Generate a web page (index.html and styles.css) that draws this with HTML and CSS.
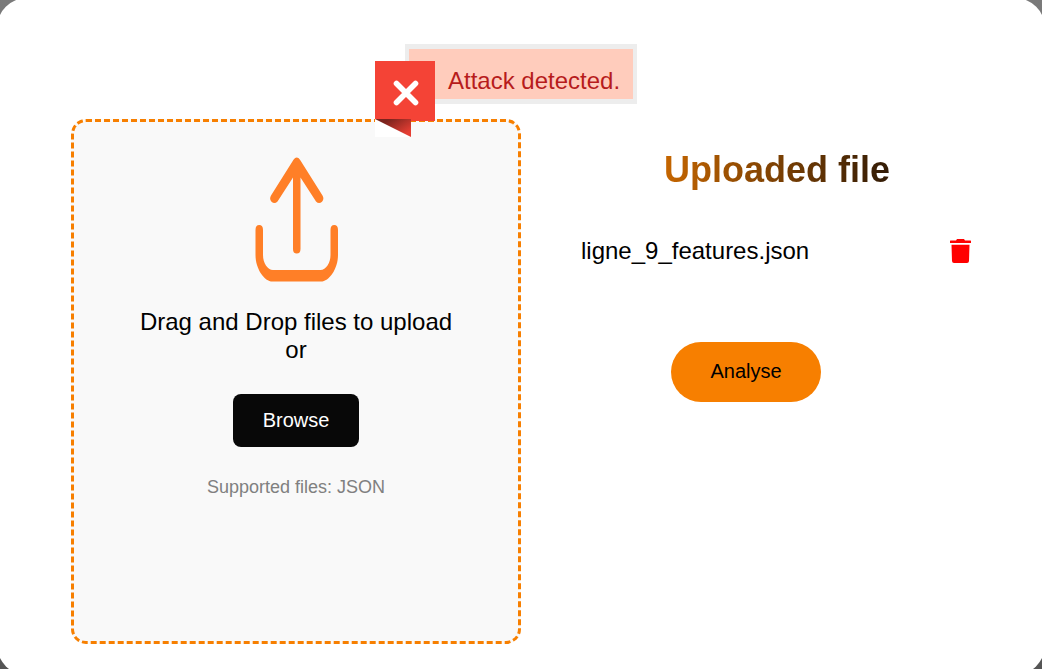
FILE: index.html
```html
<!DOCTYPE html>
<html lang="en">
<head>
<meta charset="utf-8">
<title>Upload</title>
<link rel="stylesheet" href="styles.css">
</head>
<body>
<main class="card">
  <div class="alert" role="alert">
    <span class="alert-text">Attack detected.</span>
    <span class="alert-badge">
      <svg class="cross" viewBox="0 0 26 26"><path d="M3.500 3.500 22.500 22.500M22.500 3.500 3.500 22.500"/></svg>
    </span>
    <svg class="fold" viewBox="0 0 36 18">
      <defs><linearGradient id="shade" gradientUnits="userSpaceOnUse" x1="14" y1="0" x2="26" y2="18"><stop offset="0" stop-color="#7a231d"/><stop offset="1" stop-color="#e53e33"/></linearGradient></defs>
      <rect width="36" height="18" fill="#fff"/>
      <path d="M0 0H36V18Z" fill="url(#shade)"/>
    </svg>
  </div>
  <div class="columns">
    <section class="dropzone">
      <svg class="upload-icon" viewBox="0 0 84 126">
        <path d="M41.700 .5Q43.500 .5 45 2.700L67.500 38.500Q69.500 42 67 44.700Q64 47.500 61 44.500L45.500 20.500V92Q45.500 96.500 41.700 96.500Q38 96.500 38 92V20.500L22.500 44.500Q19.500 47.500 16.500 44.700Q14 42 16 38.500L38.500 2.700Q40 .5 41.700 .5Z"/>
        <path d="M.5 73Q.5 68 4.200 68Q8 68 8 73V98C8 106 12.500 113 18 113H65.500C71 113 75.500 106 75.500 98V73Q75.500 68 79.200 68Q83 68 83 73V98C83 112 74 124.600 66 124.600H17.500C9.500 124.600.5 112 .5 98Z"/>
      </svg>
      <p class="lead">Drag and Drop files to upload<br>or</p>
      <button class="browse">Browse</button>
      <p class="hint">Supported files: JSON</p>
    </section>
    <section class="files">
      <h1 class="title">Uploaded file</h1>
      <div class="file-row">
        <span>ligne_9_features.json</span>
        <svg class="trash" viewBox="0 0 21 24"><path d="M.5 1.500H6L7 0h7l1 1.500h5.500q.5 0 .5.5V4H0V2q0-.5.5-.5ZM1.500 5.800h18L19 22q-.1 2-2 2h-13q-1.900 0-2-2Z"/></svg>
      </div>
      <button class="analyse">Analyse</button>
    </section>
  </div>
</main>
</body>
</html>
```
FILE: styles.css
```css
* { box-sizing: border-box; }
body {
  margin: 0;
  height: 669px;
  overflow: hidden;
  display: flex;
  justify-content: center;
  background: linear-gradient(#7a7a7a, #555);
  font-family: "Liberation Sans", Arial, sans-serif;
  font-size: 24px;
  color: #000;
}
p, h1 { margin: 0; }
button { border: 0; padding: 0; font-family: inherit; }
.card {
  flex: none;
  width: 1048px;
  height: 677px;
  margin-top: -2px;
  padding-top: 46px;
  border-radius: 30px;
  background: #fff;
}
.alert {
  position: relative;
  width: 232px;
  height: 60px;
  margin-left: 408px;
  padding: 17px 0 0 39px;
  border: solid #ededed;
  border-width: 5px 4px;
  background: #ffccbc;
  color: #b71c1c;
  line-height: 30px;
  white-space: nowrap;
}
.alert-badge {
  position: absolute;
  left: -34px;
  top: 12px;
  width: 60px;
  height: 60px;
  display: grid;
  place-items: center;
  padding: 3px 0 0 1px;
  background: #f44336;
}
.cross {
  width: 26px;
  height: 26px;
  fill: none;
  stroke: #fff;
  stroke-width: 5.6;
  stroke-linecap: round;
}
.fold {
  position: absolute;
  left: -34px;
  top: 70px;
  width: 36px;
  height: 18px;
}
.columns {
  display: flex;
  gap: 60px;
  margin-top: 15px;
  padding-left: 74px;
}
.dropzone {
  width: 450px;
  height: 525px;
  display: flex;
  flex-direction: column;
  align-items: center;
  padding-top: 35px;
  border: 3px dashed #f77f00;
  border-radius: 15px;
  background: #f9f9f9;
}
.upload-icon {
  width: 84px;
  height: 126px;
  margin-left: 2px;
  fill: #ff7f27;
}
.lead {
  margin-top: 25px;
  line-height: 28px;
  text-align: center;
}
.browse {
  width: 126px;
  height: 53px;
  margin-top: 30px;
  border-radius: 8px;
  background: #080808;
  color: #fff;
  font-size: 20px;
}
.hint {
  margin-top: 30px;
  color: #808080;
  font-size: 18px;
  line-height: 20px;
}
.files { width: 390px; }
.title {
  width: max-content;
  margin: 30px 0 0 83px;
  font-size: 36px;
  line-height: 42px;
  color: transparent;
  background: linear-gradient(to right, #c66600, #321b06);
  background-clip: text;
  -webkit-background-clip: text;
}
.file-row {
  display: flex;
  justify-content: space-between;
  align-items: center;
  height: 30px;
  margin-top: 45px;
}
.trash {
  width: 21px;
  height: 24px;
  fill: #f00;
}
.analyse {
  display: block;
  width: 150px;
  height: 60px;
  margin: 76px 0 0 90px;
  padding-bottom: 2px;
  border-radius: 30px;
  background: #f77f00;
  color: #000;
  font-size: 20px;
}
```
